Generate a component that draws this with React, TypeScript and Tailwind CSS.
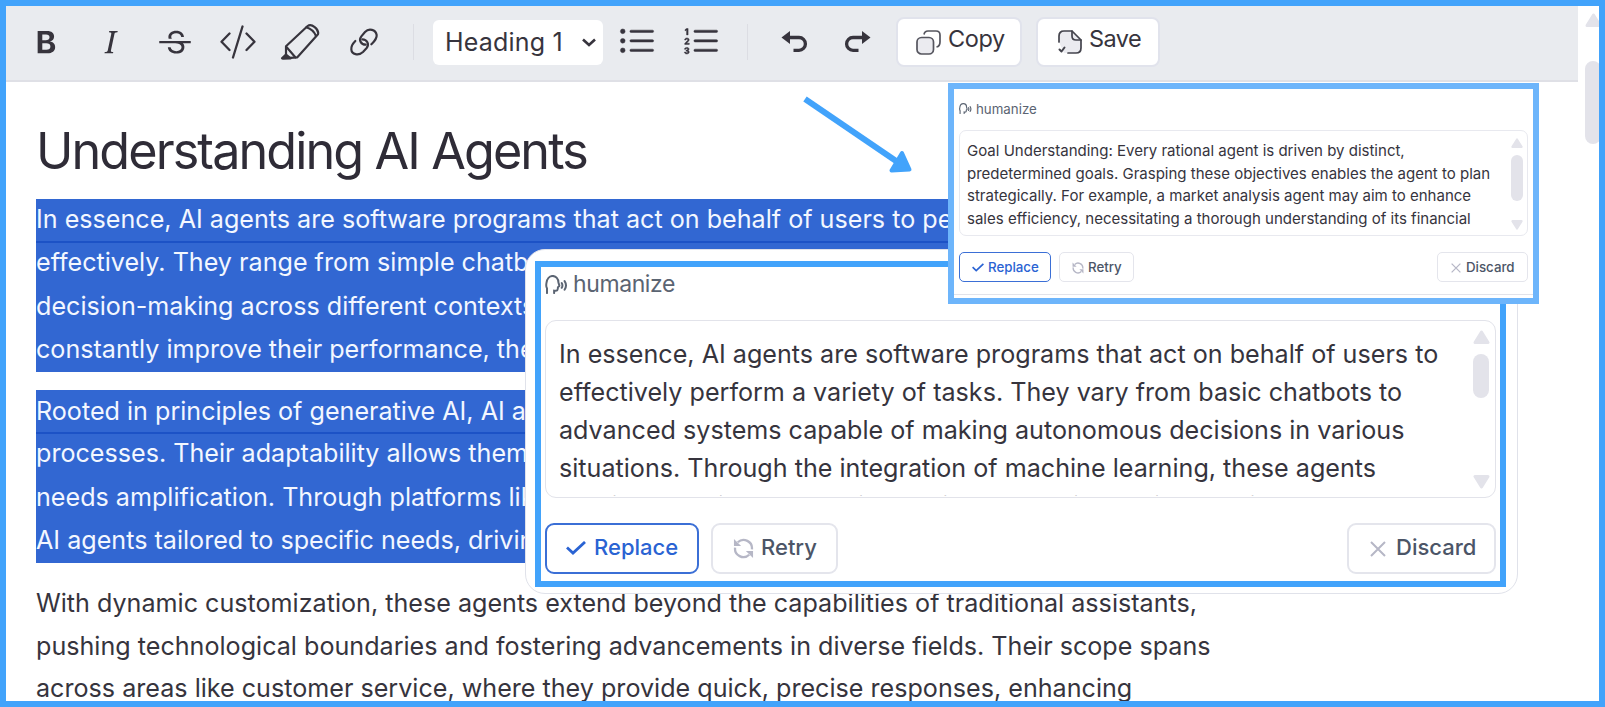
import { BsTypeBold, BsTypeItalic, BsTypeStrikethrough, BsListUl, BsListOl } from "react-icons/bs";

const LinkIcon = () => (
  <svg width="30" height="30" viewBox="0 0 90 90" fill="none" stroke="#37343d" strokeWidth="6.5" strokeLinecap="round">
    <path d="M50 53C36 53 28 39 37 28L48 15C60 2 80 8 83 24C84 36 76 43 67 52" />
    <path d="M40 37C54 37 62 52 53 63L42 75C28 88 8 82 7 67C6 56 12 49 19 42" />
  </svg>
);

const MarkerIcon = () => (
  <svg width="40" height="40" viewBox="0 0 120 120" fill="none" stroke="#37343d" strokeWidth="6.5" strokeLinecap="round" strokeLinejoin="round">
    <path d="M18 73 83 12C94 3 118 21 114 37L52 106 9 109 18 99z" />
    <path d="M79 16C92 20 103 30 108 42M20 76 46 106" />
    <path d="M18 98 32 109H6z" fill="#37343d" />
  </svg>
);

const CodeIcon = () => (
  <svg width="36" height="34" viewBox="0 0 36 34" fill="none" stroke="#37343d" strokeWidth="2.3" strokeLinecap="round" strokeLinejoin="round">
    <path d="M9.5 8.5 1.5 16.7 9.5 25M26.5 8.5l8 8.2-8 8.3M22.5 1.5 13 32.5" />
  </svg>
);

const UndoIcon = ({ className = "" }: { className?: string }) => (
  <svg width="27" height="22" viewBox="0 0 27 22" className={className}>
    <path d="M7 6.5h11a6.4 6.4 0 0 1 0 12.8H12.5" fill="none" stroke="#37343d" strokeWidth="3.3" />
    <path d="M.5 6.5 9 0v13z" fill="#37343d" />
  </svg>
);

const CopyIcon = () => (
  <svg width="25" height="25" viewBox="0 0 25 25" fill="none" stroke="#55555e" strokeWidth="1.7">
    <rect x="1" y="7.5" width="16.5" height="16.5" rx="4.5" fill="#ebebf0" />
    <path d="M8 4.5C8.5 2 9.5 1 12 1h8c2.5 0 4 1.5 4 4v7c0 3-1 4.5-3.5 5" />
  </svg>
);

const SaveIcon = () => (
  <svg width="24" height="24" viewBox="0 0 24 24" fill="none" stroke="#44444d" strokeWidth="1.7" strokeLinecap="round" strokeLinejoin="round">
    <path d="M1 12V6c0-3 2-5 5-5h8l9 9v8c0 3-2 5-5 5H6L1 12z" fill="#ebebf0" stroke="none" />
    <path d="M1 12V6c0-3 2-5 5-5h8l9 9v8c0 3-2 5-5 5h-8" />
    <path d="M14 1v5c0 2.5 1.5 4 4 4h5" />
    <path d="M1.5 19.5 3.5 21.5 6.5 17.5" strokeWidth="2" />
  </svg>
);

const SpeakIcon = ({ className = "" }: { className?: string }) => (
  <svg viewBox="0 0 24 20" fill="none" stroke="#5b6472" strokeWidth="2.1" strokeLinecap="round" className={className}>
    <path d="M2 19v-5C1 12.5 1 10.5 1.5 8 2 4 4.5 1 8 1s6 3 6 6.5c0 1 1.2 3 1 4s-1.5.5-1.5 1.5c0 3-.5 4-4 3.5V19" />
    <path d="M17.5 8.5q1.5 2.5 0 5M20.5 6.5q3 4.5 0 9" />
  </svg>
);

const CheckIcon = ({ className = "" }: { className?: string }) => (
  <svg viewBox="0 0 20 14" fill="none" stroke="#2a63d3" strokeWidth="2.8" className={className}>
    <path d="M1 6.5l6 5.5L19 1" />
  </svg>
);

const RetryIcon = ({ className = "" }: { className?: string }) => (
  <svg viewBox="0 0 22 22" fill="none" stroke="#b6b7c6" strokeWidth="2.4" className={className}>
    <path d="M5 4.5A8.8 8.8 0 0 1 19.8 12M17 17.5A8.8 8.8 0 0 1 2.2 10" />
    <path d="M1 1v7.5h7.5zM21 21v-7.5h-7.5z" fill="#b6b7c6" stroke="none" />
  </svg>
);

const CrossIcon = ({ className = "" }: { className?: string }) => (
  <svg viewBox="0 0 16 16" fill="none" stroke="#b6b7c6" strokeWidth="2" className={className}>
    <path d="M1 1l14 14M15 1 1 15" />
  </svg>
);

const Triangle = ({ className = "" }: { className?: string }) => (
  <svg viewBox="0 0 17 14" fill="#e3e3ea" stroke="#e3e3ea" strokeWidth="3" strokeLinejoin="round" className={className}>
    <path d="M8.5 2 15 12.5H2z" />
  </svg>
);

const Toolbar = () => (
  <header className="flex h-[76px] w-[1572px] items-center border-b-2 border-[#dfe0e6] bg-[#e9ebef] pb-0.5 text-[#37343d]">
    <div className="flex h-9 w-[408px] items-center border-r border-[#dcdde3]">
      <BsTypeBold className="ml-[23px] size-9 shrink-0" />
      <BsTypeItalic className="ml-7 size-9 shrink-0" />
      <BsTypeStrikethrough className="ml-7 size-9 shrink-0" />
      <div className="ml-[27px] shrink-0"><CodeIcon /></div>
      <div className="ml-6 shrink-0"><MarkerIcon /></div>
      <div className="ml-[29px] shrink-0"><LinkIcon /></div>
    </div>
    <div className="ml-[19px] flex h-[45px] w-[170px] items-center justify-between rounded-md bg-white pr-[7px] pl-3">
      <span className="pt-px text-[25px] tracking-[0.2px]">Heading 1</span>
      <svg width="14" height="9" viewBox="0 0 14 9" fill="none" stroke="#37343d" strokeWidth="2.6">
        <path d="M1 1.5l6 5.5 6-5.5" />
      </svg>
    </div>
    <BsListUl className="ml-[15px] size-[38px] stroke-[0.2]" />
    <BsListOl className="ml-[26px] size-[38px] stroke-[0.2]" />
    <div className="ml-[27px] h-9 w-px bg-[#dcdde3]" />
    <UndoIcon className="ml-[33px]" />
    <UndoIcon className="ml-9 -scale-x-100" />
    <button className="ml-[25px] flex h-[50px] w-[126px] items-center gap-[7px] rounded-lg border-2 border-[#e1e3ec] bg-white pl-[18px] text-[23.5px]">
      <CopyIcon />
      <span className="-mt-1.5 tracking-[-0.4px]">Copy</span>
    </button>
    <button className="ml-[14px] flex h-[50px] w-[124px] items-center gap-[7px] rounded-lg border-2 border-[#e1e3ec] bg-white pl-5 text-[23.5px]">
      <SaveIcon />
      <span className="-mt-1.5 tracking-[-0.6px]">Save</span>
    </button>
  </header>
);

const Lines = ({ lines, className = "" }: { lines: string[]; className?: string }) => (
  <p className={className}>
    {lines.map((line) => (
      <span key={line} className="block">{line}</span>
    ))}
  </p>
);

const Article = () => (
  <article className="pl-[30px] text-[25.13px] leading-[43.5px] whitespace-nowrap text-[#36343d]">
    <h1 className="mt-[38px] h-[79px] text-[50.3px] leading-[62px] font-normal tracking-[-1.9px] text-[#2f2c37]">Understanding AI Agents</h1>
    <div className="h-[173px] w-[1160px] bg-[#3267d2] text-[#f3f7ff]">
      <div className="h-[44px] border-b-2 border-[#1c52c6] leading-[41px]">In essence, AI agents are software programs that act on behalf of users to pe</div>
      <Lines
        className="-mt-0.5"
        lines={["effectively. They range from simple chatbots", "decision-making across different contexts", "constantly improve their performance, they"]}
      />
    </div>
    <div className="mt-[18px] h-[173px] w-[1160px] bg-[#3267d2] text-[#f3f7ff]">
      <div className="h-[44px] border-b-2 border-[#1c52c6] leading-[42px]">Rooted in principles of generative AI, AI agents</div>
      <Lines
        className="-mt-0.5"
        lines={["processes. Their adaptability allows them", "needs amplification. Through platforms like", "AI agents tailored to specific needs, driving"]}
      />
    </div>
    <Lines
      className="mt-[19px] leading-[42.7px]"
      lines={[
        "With dynamic customization, these agents extend beyond the capabilities of traditional assistants,",
        "pushing technological boundaries and fostering advancements in diverse fields. Their scope spans",
        "across areas like customer service, where they provide quick, precise responses, enhancing",
      ]}
    />
  </article>
);

const LargePopup = () => (
  <section className="absolute top-[249px] left-[525px] h-[345px] w-[993px] rounded-[20px] border border-[#e0e2ea] bg-white px-[9px] pt-[11px]">
    <div className="h-[326px] w-[971px] border-6 border-[#42a3fb] px-1 text-[22px] font-medium text-[#4c5567]">
      <div className="flex h-[53px] items-start gap-[5px] font-normal text-[#5b6472]">
        <SpeakIcon className="mt-2 h-[19px] w-[23px]" />
        <span className="text-[23px] leading-[35px] tracking-[-0.4px]">humanize</span>
      </div>
      <div className="flex h-[178px] w-[951px] justify-between overflow-hidden rounded-[11px] border-[1.5px] border-[#e2e3ea] pr-[5px] pl-[13px]">
        {/* the fifth line only peeks out above the lower edge */}
        <Lines
          className="h-[175px] overflow-hidden pt-[14px] text-[25.14px] leading-[38.1px] font-normal whitespace-nowrap text-[#36343d]"
          lines={[
            "In essence, AI agents are software programs that act on behalf of users to",
            "effectively perform a variety of tasks. They vary from basic chatbots to",
            "advanced systems capable of making autonomous decisions in various",
            "situations. Through the integration of machine learning, these agents",
            "continuously improve their functions, adapting their behavior",
          ]}
        />
        <div className="flex w-[17px] flex-col pt-[9px]">
          <Triangle className="h-[14px] w-[17px]" />
          <div className="mt-2.5 h-11 w-4 rounded-full bg-[#e3e3ea]" />
          <Triangle className="mt-[77px] h-[14px] w-[17px] rotate-180" />
        </div>
      </div>
      <div className="mt-[25px] flex w-[951px]">
        <button className="flex h-[51px] w-[154px] items-center gap-2 rounded-[9px] border-2 border-[#3b6fd6] pb-0.5 pl-[19px] text-[#2a63d3]">
          <CheckIcon className="h-[14px] w-5" />
          Replace
        </button>
        <button className="ml-3 flex h-[51px] w-[127px] items-center gap-[7px] rounded-[9px] border-2 border-[#e4e5ec] pb-0.5 pl-5">
          <RetryIcon className="mt-0.5 size-[21px]" />
          Retry
        </button>
        <button className="ml-auto flex h-[51px] w-[149px] items-center gap-[10px] rounded-[9px] border-2 border-[#e4e5ec] pb-0.5 pl-[21px]">
          <CrossIcon className="mt-0.5 size-4" />
          Discard
        </button>
      </div>
    </div>
  </section>
);

const SmallPopup = () => (
  <section className="absolute top-[83px] left-[948px] h-[221px] w-[591px] border-6 border-[#6db5fb] bg-white">
    <div className="h-[206px] border-b border-[#e2e3ea] px-[5px] pt-[9px] text-[13.3px] font-medium text-[#4c5567]">
      <div className="flex h-[32px] gap-1 font-normal text-[#5b6472]">
        <SpeakIcon className="mt-[5px] h-[11px] w-[13px]" />
        <span className="leading-[23px]">humanize</span>
      </div>
      <div className="flex h-[106px] w-[569px] justify-between rounded-[7px] border-[1.5px] border-[#e8e9ef] pr-[4px] pl-[7px]">
        <Lines
          className="pt-[9px] text-[15.02px] leading-[22.5px] font-normal whitespace-nowrap text-[#36343d]"
          lines={[
            "Goal Understanding: Every rational agent is driven by distinct,",
            "predetermined goals. Grasping these objectives enables the agent to plan",
            "strategically. For example, a market analysis agent may aim to enhance",
            "sales efficiency, necessitating a thorough understanding of its financial",
          ]}
        />
        <div className="flex w-3 flex-col pt-[7px]">
          <Triangle className="h-[10px] w-3" />
          <div className="mt-[7px] h-[46px] w-3 rounded-full bg-[#e3e3ea]" />
          <Triangle className="mt-[19px] h-[10px] w-3 rotate-180" />
        </div>
      </div>
      <div className="mt-[16px] flex w-[569px]">
        <button className="flex h-[30px] w-[92px] items-center gap-1 rounded-[5px] border border-[#3b6fd6] pt-px pl-3 text-[#2a63d3]">
          <CheckIcon className="h-[9px] w-3" />
          Replace
        </button>
        <button className="ml-2 flex h-[30px] w-[75px] items-center gap-1 rounded-[5px] border border-[#e4e5ec] pt-px pl-3">
          <RetryIcon className="size-3" />
          Retry
        </button>
        <button className="ml-auto flex h-[30px] w-[91px] items-center gap-[5px] rounded-[5px] border border-[#e4e5ec] pt-px pl-[13px]">
          <CrossIcon className="size-[10px]" />
          Discard
        </button>
      </div>
    </div>
  </section>
);

export default function App() {
  return (
    <main className="relative flex h-[707px] w-[1605px] overflow-hidden border-6 border-[#42a3fb] bg-white font-['Inter',sans-serif]">
      <div className="w-[1572px] shrink-0">
        <Toolbar />
        <Article />
      </div>
      {/* page scrollbar, partly cut off by the frame */}
      <div className="flex w-[21px] shrink-0 flex-col pt-[7px] pl-[7px]">
        <Triangle className="h-[14px] w-[17px] shrink-0" />
        <div className="mt-[34px] h-[83px] w-4 rounded-full bg-[#e3e3ea]" />
      </div>
      <div className="absolute -top-1.5 -left-1.5">
        <LargePopup />
        <SmallPopup />
        <svg className="absolute top-[90px] left-[795px]" width="125" height="90" viewBox="795 90 125 90">
          <path d="M805 99 899 163" stroke="#42a3fb" strokeWidth="6" />
          <path d="M902 153 909.5 169.5 891.5 170.5z" fill="#42a3fb" stroke="#42a3fb" strokeWidth="4" strokeLinejoin="round" />
        </svg>
      </div>
    </main>
  );
}
